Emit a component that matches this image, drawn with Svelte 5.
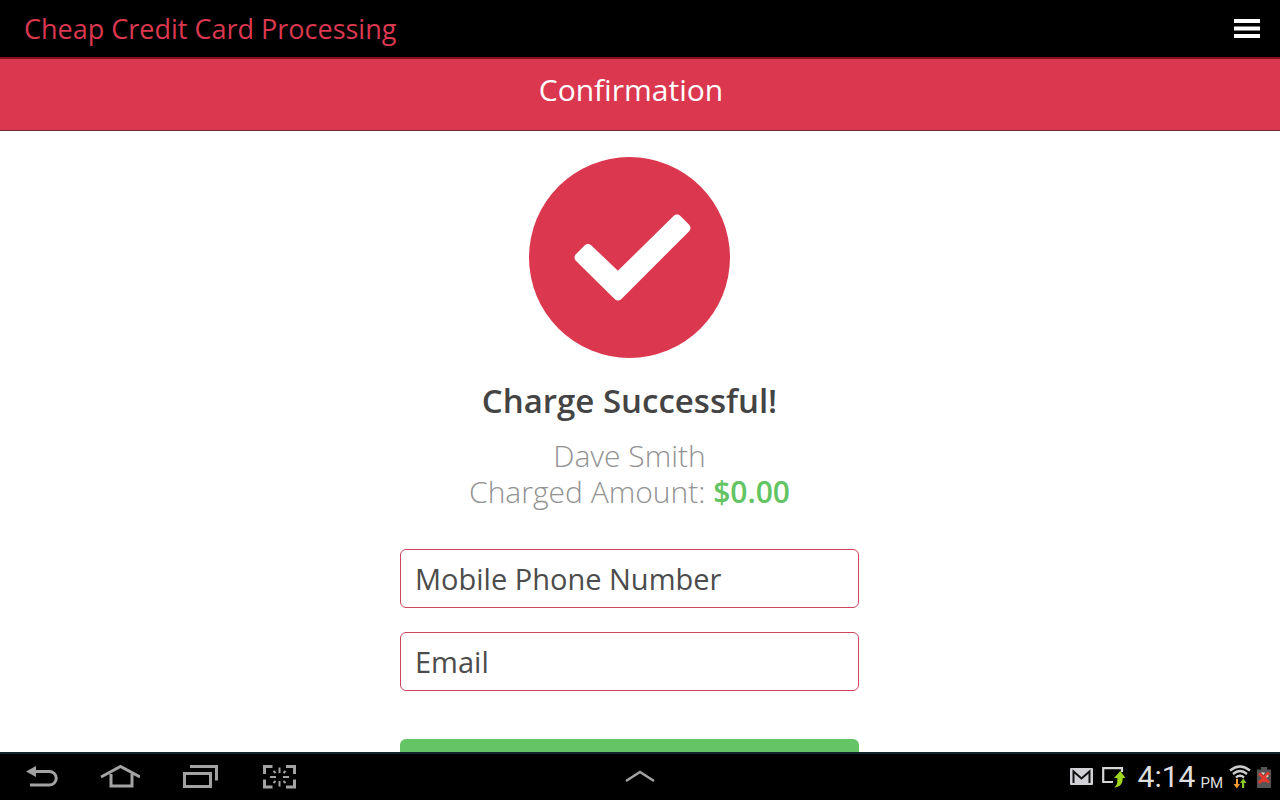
<script lang="ts">
	let phone = $state('');
	let email = $state('');

	const customer = 'Dave Smith';
	const amount = 0;
</script>

<div class="screen">
	<header class="topbar">
		<span class="brand">Cheap Credit Card Processing</span>
		<button class="menu" type="button" aria-label="Menu">
			<svg width="28" height="20" viewBox="0 0 28 20">
				<path d="M1 0h26v4H1zM1 7.500h26v4H1zM1 15h26v4H1z" fill="#fff" />
			</svg>
		</button>
	</header>

	<h1 class="title">Confirmation</h1>

	<main>
		<svg class="check" width="201" height="201" viewBox="0 0 201 201" aria-hidden="true">
			<circle cx="100.5" cy="100.5" r="100.5" fill="#db384f" />
			<path
				d="M50 100.500 59 91.500 89 120 148 62 157 71 89 139Z"
				fill="#fff"
				stroke="#fff"
				stroke-width="9"
				stroke-linejoin="round"
			/>
		</svg>

		<h2>Charge Successful!</h2>
		<p class="summary">
			{customer}<br />
			Charged Amount: <strong>${amount.toFixed(2)}</strong>
		</p>

		<form>
			<input type="tel" aria-label="Mobile Phone Number" placeholder="Mobile Phone Number" bind:value={phone} />
			<input type="email" aria-label="Email" placeholder="Email" bind:value={email} />
			<button class="send" type="button" aria-label="Send"></button>
		</form>
	</main>

	<footer class="system">
		<nav class="keys">
			<button type="button" aria-label="Back">
				<svg width="40" height="30" viewBox="0 0 40 30">
					<path d="M14 9.500H29.500a6.500 6.500 0 0 1 0 13.500H10" fill="none" stroke="#a3a3a3" stroke-width="3" />
					<path d="M6 9.500 16 4v11z" fill="#a3a3a3" />
				</svg>
			</button>
			<button type="button" aria-label="Home">
				<svg width="40" height="30" viewBox="0 0 40 30">
					<path d="M1 15 20.500 4.500 40 15M11 12v12h21V12" fill="none" stroke="#a3a3a3" stroke-width="3" />
				</svg>
			</button>
			<button type="button" aria-label="Recent apps">
				<svg width="40" height="30" viewBox="0 0 40 30">
					<path d="M4.500 11.500h26v13h-26zM10 4.500h26.500v14" fill="none" stroke="#a3a3a3" stroke-width="3" />
				</svg>
			</button>
			<button type="button" aria-label="Screen capture">
				<svg width="40" height="30" viewBox="0 0 40 30">
					<path d="M4.500 12V4.500h8M26 4.500h8.500V12M4.500 17.500v7.500h8M26 25h8.500v-7.500" fill="none" stroke="#a3a3a3" stroke-width="3" />
					<path
						d="M19.500 5.500v5.500M19.500 19v5.500M10 15h6M23 15h6M13.500 9l2 2M25.500 9l-2 2M13.500 21l2-2M25.500 21l-2-2"
						stroke="#a3a3a3"
						stroke-width="2"
					/>
				</svg>
			</button>
		</nav>

		<button class="expand" type="button" aria-label="Show mini apps">
			<svg width="32" height="14" viewBox="0 0 32 14">
				<path d="M2 11 16 2l14 9" fill="none" stroke="#a3a3a3" stroke-width="2.400" />
			</svg>
		</button>

		<div class="status">
			<svg class="mail" width="23" height="18" viewBox="0 0 23 18">
				<rect width="23" height="17" rx="1" fill="#d2d2d6" />
				<path d="M3.500 15V3.500l8 7 8-7V15" fill="none" stroke="#111" stroke-width="2" />
			</svg>
			<svg class="share" width="24" height="21" viewBox="0 0 24 21">
				<path d="M11 15H1.200V1.200H20V5" fill="none" stroke="#d6d6d6" stroke-width="2.200" />
				<path d="M12 20.500c3-1.500 3.500-5 3.300-9.500H12l6.300-7L23.500 11h-2.800c0 6-3 9.500-8.700 9.500z" fill="#9fd41f" />
			</svg>
			<time class="clock">4:14</time>
			<span class="period">PM</span>
			<svg class="wifi" width="22" height="24" viewBox="0 0 22 24">
				<g fill="none" stroke="#ccc" stroke-width="2.400">
					<path d="M1 5.500q10-8 20 0" />
					<path d="M4 9q7-6 14 0" />
					<path d="M7 12.500q4-3.500 8 0" />
				</g>
				<path d="M7 14h2v5h2l-3.200 4.500L4.500 19H7z" fill="#f59a2c" />
				<path d="M13 23h2.200v-5H17.500L14.200 13.500 11 18h2z" fill="#8ac926" />
			</svg>
			<svg class="battery" width="14" height="21" viewBox="0 0 14 21">
				<path d="M4 0h6v2.500h4V21H0V2.500h4z" fill="#555" />
				<path d="M2 6.500 12 15.500M12 5.500 2 16M7 9v6" stroke="#e63a2e" stroke-width="3" />
				<path d="M4 5.500h4L6.500 8zM10 8l2 1-3 2z" fill="#f1d3cb" />
			</svg>
		</div>
	</footer>
</div>

<style>
	:global(body) {
		margin: 0;
		background: #fff;
	}

	.screen {
		display: flex;
		flex-direction: column;
		height: 100vh;
		overflow: hidden;
		font-family: 'Open Sans', 'Noto Sans', sans-serif;
		font-weight: 400;
		color: #444;
	}

	button {
		display: flex;
		padding: 0;
		border: 0;
		background: none;
		cursor: pointer;
	}

	.topbar {
		display: flex;
		flex: none;
		align-items: center;
		justify-content: space-between;
		height: 57px;
		padding: 0 19px 0 24px;
		border-bottom: 2px solid #8a0f1c;
		background: #000;
	}

	.brand {
		font-size: 27px;
		line-height: 36px;
		color: #db384f;
	}

	.title {
		flex: none;
		margin: 0;
		padding: 13px 18px 22px 0;
		border-bottom: 1px solid #6b2a35;
		background: #db384f;
		color: #fff;
		font-size: 30px;
		font-weight: 400;
		line-height: 36px;
		text-align: center;
	}

	main {
		display: flex;
		flex: 1;
		flex-direction: column;
		align-items: center;
		min-height: 0;
		padding: 26px 21px 0 0;
		overflow: hidden;
		text-align: center;
	}

	.check {
		flex: none;
	}

	h2 {
		margin: 20px 0 14px;
		font-size: 33px;
		font-weight: 600;
		line-height: 46px;
	}

	.summary {
		margin: 0 0 39px;
		font-size: 30px;
		font-weight: 300;
		line-height: 36px;
		color: #929292;
	}

	.summary strong {
		font-weight: 600;
		color: #62c462;
	}

	form {
		display: flex;
		flex-direction: column;
		width: 100%;
		max-width: 459px;
	}

	input {
		box-sizing: border-box;
		width: 100%;
		height: 59px;
		margin-bottom: 24px;
		padding: 0 14px;
		border: 1px solid #d0455b;
		border-radius: 6px;
		background: #fff;
		color: #4c4c4c;
		font: inherit;
		font-size: 29px;
	}

	input::placeholder {
		color: #4c4c4c;
		opacity: 1;
	}

	.send {
		height: 59px;
		margin-top: 24px;
		border-radius: 6px;
		background: #65c565;
	}

	.system {
		display: grid;
		flex: none;
		grid-template-columns: 1fr auto 1fr;
		align-items: center;
		height: 46px;
		border-top: 2px solid #12242e;
		background: #000;
	}

	.keys {
		display: flex;
		gap: 40px;
		padding: 0 0 0 20px;
	}

	.status {
		display: flex;
		align-items: center;
		justify-content: flex-end;
		padding-right: 9px;
		color: #dedede;
		font-family: Roboto, sans-serif;
	}

	.share {
		margin: 0 12px 0 9px;
	}

	.clock {
		font-size: 30px;
		line-height: 36px;
	}

	.period {
		align-self: flex-end;
		margin: 0 6px 0 5px;
		font-size: 15px;
		line-height: 24px;
	}

	.battery {
		margin-left: 6px;
	}
</style>
